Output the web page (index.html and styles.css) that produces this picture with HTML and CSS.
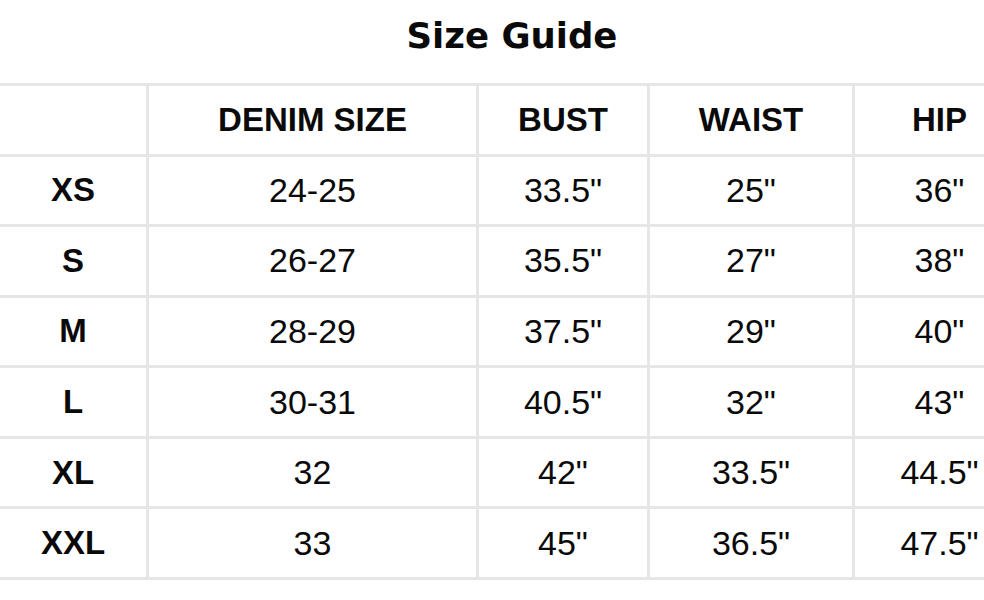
FILE: index.html
```html
<!DOCTYPE html>
<html lang="en">
<head>
<meta charset="utf-8">
<title>Size Guide</title>
<link rel="stylesheet" href="styles.css">
</head>
<body>
<div class="guide">
  <h1 class="title">Size Guide</h1>
  <div class="chart">
    <div class="cell head"></div>
    <div class="cell head">DENIM SIZE</div>
    <div class="cell head">BUST</div>
    <div class="cell head">WAIST</div>
    <div class="cell head">HIP</div>

    <div class="cell label">XS</div>
    <div class="cell">24-25</div>
    <div class="cell">33.5"</div>
    <div class="cell">25"</div>
    <div class="cell">36"</div>

    <div class="cell label">S</div>
    <div class="cell">26-27</div>
    <div class="cell">35.5"</div>
    <div class="cell">27"</div>
    <div class="cell">38"</div>

    <div class="cell label">M</div>
    <div class="cell">28-29</div>
    <div class="cell">37.5"</div>
    <div class="cell">29"</div>
    <div class="cell">40"</div>

    <div class="cell label">L</div>
    <div class="cell">30-31</div>
    <div class="cell">40.5"</div>
    <div class="cell">32"</div>
    <div class="cell">43"</div>

    <div class="cell label">XL</div>
    <div class="cell">32</div>
    <div class="cell">42"</div>
    <div class="cell">33.5"</div>
    <div class="cell">44.5"</div>

    <div class="cell label">XXL</div>
    <div class="cell">33</div>
    <div class="cell">45"</div>
    <div class="cell">36.5"</div>
    <div class="cell">47.5"</div>
  </div>
</div>
</body>
</html>
```

FILE: styles.css
```css
html {
  overflow: hidden;
  background: #ffffff;
}

body {
  margin: 0;
  font-family: "Liberation Sans", Arial, sans-serif;
  color: #0a0a0a;
}

.guide {
  width: 1024px;
}

.title {
  margin: 0;
  height: 83px;
  padding-top: 12px;
  box-sizing: border-box;
  text-align: center;
  font-family: "DejaVu Sans", sans-serif;
  font-weight: bold;
  font-size: 35.5px;
  line-height: 48px;
  color: #0a0a0a;
}

.chart {
  display: grid;
  grid-template-columns: 146px 327px 168px 202px 169px;
  grid-template-rows: repeat(7, 67.57px);
  gap: 3px;
  padding: 3px 0;
  background: #e6e6e9;
}

.cell {
  background: #ffffff;
  display: flex;
  align-items: center;
  justify-content: center;
  font-size: 34px;
  white-space: nowrap;
}

.head,
.label {
  font-weight: bold;
  font-size: 33px;
}
```
